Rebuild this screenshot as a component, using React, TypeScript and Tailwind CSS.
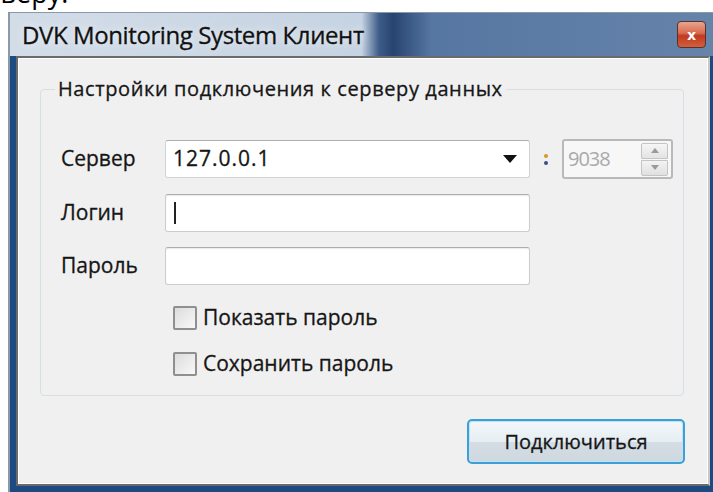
import React from "react";

const font = { fontFamily: '"Open Sans", "Noto Sans", sans-serif' };

const Field = ({ children }: { children?: React.ReactNode }) => (
  <div className="w-[365px] h-[38px] bg-white border border-[#c9cdd3] border-t-[#abadb3] rounded-[3px] flex items-center px-[8px] shadow-[inset_0_1px_1px_rgba(0,0,0,0.08)]">
    {children}
  </div>
);

const Check = ({ label }: { label: string }) => (
  <label className="flex items-center gap-[6px] h-[25px]">
    <span className="w-[24px] h-[24px] rounded-[2px] border-2 border-[#8f8f8f] bg-gradient-to-br from-[#dcdcdc] to-[#f8f8f8]" />
    <span className="text-[21px] text-[#161616] leading-none [-webkit-text-stroke:0.3px_#161616]">{label}</span>
  </label>
);

export default function App() {
  return (
    <div className="w-[713px] h-[492px] bg-white overflow-hidden relative" style={font}>
      <div className="absolute left-[-44px] top-[-21px] text-[27px] text-black leading-none">серверу.</div>

      <div className="absolute left-[8px] top-[12px] w-[705px] h-[480px] border-l-2 border-t border-[#8a98a8] bg-[linear-gradient(90deg,#d3dde8_0%,#c6d3e2_50%,#3d5c88_52.5%,#27446f_54.5%,#5677a2_60%,#6683aa_100%)] flex flex-col">
        <div className="h-[43px] flex items-center pl-[12px] pr-[7px] shrink-0">
          <span className="text-[24px] text-[#111] tracking-[-0.4px] [text-shadow:0_0_8px_rgba(255,255,255,0.9)] [-webkit-text-stroke:0.3px_#111]">
            DVK Monitoring System Клиент
          </span>
          <div className="ml-auto w-[29px] h-[27px] rounded-[4px] border border-[#5a3028] bg-[linear-gradient(180deg,#e9a48e_0%,#d76a4d_45%,#c03a1f_55%,#d2603f_100%)] flex items-center justify-center">
            <span className="text-white text-[15px] font-bold leading-none">x</span>
          </div>
        </div>

        <div className="flex-1 bg-[#1e4a82] pl-[6px] pb-[6px] pr-[3px] flex">
          <div className="flex-1 min-w-0 border-2 border-[#6a6a6a] border-r-[#c8c8c8] bg-white p-[1px] flex">
            <div className="flex-1 min-w-0 bg-[#f0f0f0] pt-[15px] pl-[21px] pr-[23px] flex flex-col">
              <fieldset className="min-w-0 border border-[#d5dfe5] rounded-[4px] h-[322px] pl-[20px] pr-[8px] pb-[10px] m-0">
                <legend className="px-[3px] ml-[-6px] text-[20px] tracking-[0.6px] text-[#161616] [-webkit-text-stroke:0.3px_#161616]">
                  Настройки подключения к серверу данных
                </legend>
                <div className="flex flex-col gap-[15px] mt-[35px]">
                  <div className="flex items-center">
                    <span className="w-[104px] text-[21px] text-[#161616] [-webkit-text-stroke:0.3px_#161616]">Сервер</span>
                    <div className="w-[365px] h-[38px] bg-white border border-[#d0d4da] border-t-[#abadb3] rounded-[3px] flex items-center pl-[7px] pr-[12px]">
                      <span className="text-[21px] tracking-[1px] text-[#161616] [-webkit-text-stroke:0.3px_#161616]">127.0.0.1</span>
                      <svg className="ml-auto" width="14" height="8" viewBox="0 0 14 8">
                        <path d="M0 0h14L7 8z" fill="#111" />
                      </svg>
                    </div>
                    <span className="w-[32px] flex flex-col items-center gap-[3px]">
                      <span className="w-[4px] h-[4px] rounded-full bg-[#d29a2a]" />
                      <span className="w-[4px] h-[4px] rounded-full bg-[#3a4f8a]" />
                    </span>
                    <div className="w-[111px] h-[40px] bg-[#f7f7f7] border-2 border-[#b9b9b9] rounded-[3px] flex items-center pl-[4px] pr-[3px]">
                      <span className="text-[20px] text-[#a9a9a9] tracking-[-1px]">9038</span>
                      <div className="ml-auto w-[27px] h-[33px] flex flex-col gap-[1px]">
                        <div className="flex-1 border border-[#c4c4c4] rounded-t-[2px] bg-[linear-gradient(180deg,#f6f6f6,#e3e3e3)] flex items-center justify-center">
                          <svg width="8" height="5" viewBox="0 0 8 5"><path d="M0 5h8L4 0z" fill="#9a9a9a" /></svg>
                        </div>
                        <div className="flex-1 border border-[#c4c4c4] rounded-b-[2px] bg-[linear-gradient(180deg,#f3f3f3,#e0e0e0)] flex items-center justify-center">
                          <svg width="8" height="5" viewBox="0 0 8 5"><path d="M0 0h8L4 5z" fill="#9a9a9a" /></svg>
                        </div>
                      </div>
                    </div>
                  </div>
                  <div className="flex items-center">
                    <span className="w-[104px] text-[21px] text-[#161616] [-webkit-text-stroke:0.3px_#161616]">Логин</span>
                    <Field>
                      <span className="w-[2px] h-[22px] bg-[#222]" />
                    </Field>
                  </div>
                  <div className="flex items-center">
                    <span className="w-[104px] text-[21px] text-[#161616] [-webkit-text-stroke:0.3px_#161616]">Пароль</span>
                    <Field />
                  </div>
                </div>
                <div className="flex flex-col gap-[21px] mt-[20px] ml-[112px]">
                  <Check label="Показать пароль" />
                  <Check label="Сохранить пароль" />
                </div>
              </fieldset>
              <div className="flex justify-end mt-[23px] mr-[-1px]">
                <button className="w-[218px] h-[45px] rounded-[5px] border-2 border-[#3d9fd6] bg-[linear-gradient(180deg,#f2f7fa_0%,#e6eef3_50%,#d4dde3_52%,#cfd8de_100%)] shadow-[inset_0_0_0_1px_#bfe4f6] text-[20px] text-[#161616] [-webkit-text-stroke:0.3px_#161616]">
                  Подключиться
                </button>
              </div>
            </div>
          </div>
        </div>
      </div>
    </div>
  );
}
